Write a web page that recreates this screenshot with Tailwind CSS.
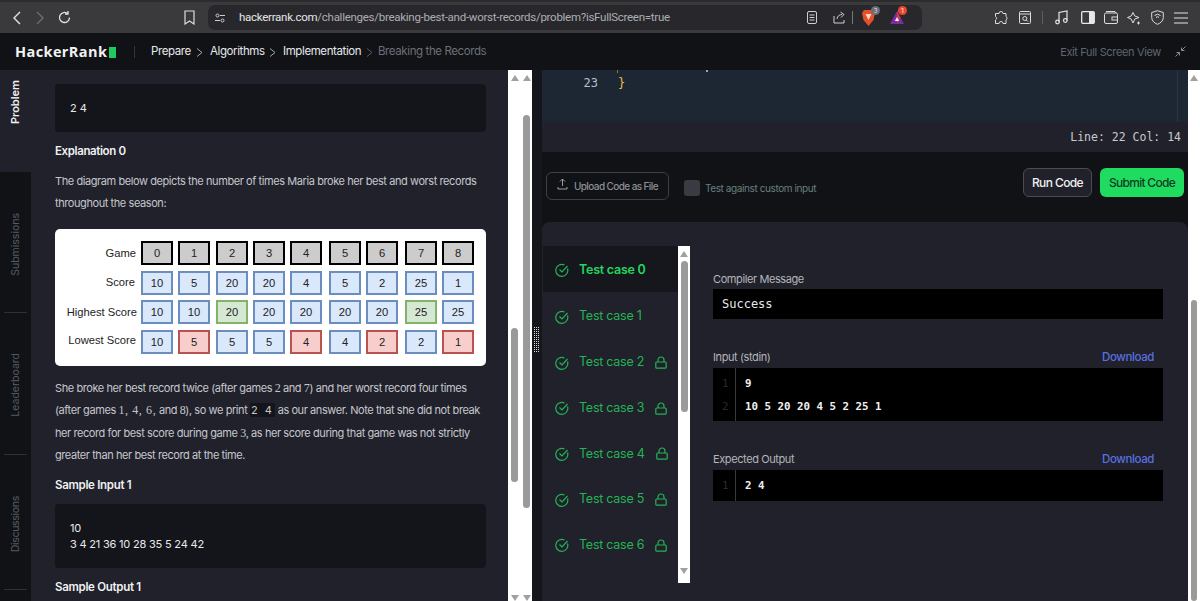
<!DOCTYPE html>
<html>
<head>
<meta charset="utf-8">
<script src="https://cdn.jsdelivr.net/npm/@tailwindcss/browser@4"></script>
</head>
<body class="w-[1200px] h-[601px] overflow-hidden bg-[#101216] font-['Inter',sans-serif]">
<!-- Browser bar -->
<div class="h-[33px] bg-[#3a3a3d] border-t-2 border-[#2c2c2f] flex items-center text-[#d6d6d8] relative">
  <svg class="ml-[12px] w-[10px] h-[14px]" viewBox="0 0 10 14" fill="none" stroke="#e4e4e6" stroke-width="1.4"><path d="M8 1 2 7l6 6"/></svg>
  <svg class="ml-[13px] w-[10px] h-[14px]" viewBox="0 0 10 14" fill="none" stroke="#6d6d70" stroke-width="1.4"><path d="M2 1l6 6-6 6"/></svg>
  <svg class="ml-[12px] w-[15px] h-[15px]" viewBox="0 0 15 15" fill="none" stroke="#e4e4e6" stroke-width="1.3"><path d="M12.5 7.5a5 5 0 1 1-1.6-3.7"/><path d="M11 1v3H8"/></svg>
  <svg class="ml-[112px] w-[11px] h-[15px]" viewBox="0 0 11 15" fill="none" stroke="#dcdcde" stroke-width="1.2"><path d="M1 1h9v13l-4.500-3L1 14z"/></svg>
  <div class="ml-[13px] w-[714px] h-[25px] rounded-[7px] bg-[#28282c] flex items-center">
    <svg class="ml-[7px] w-[10px] h-[10px]" viewBox="0 0 10 10" fill="none" stroke="#cfcfd2"><circle cx="2.500" cy="2.500" r="1.500"/><circle cx="7.500" cy="7.500" r="1.500"/><path d="M5 2.500h5M0 7.500h5"/></svg>
    <span class="ml-[14px] w-[500px] text-[11.500px] tracking-[-.27px] whitespace-nowrap text-[#aeaeb2] font-['Roboto',sans-serif]"><span class="text-[#e6e6e8]">hackerrank.com</span>/challenges/breaking-best-and-worst-records/problem?isFullScreen=true</span>
    <svg class="ml-[68px] w-[10px] h-[13px]" viewBox="0 0 10 13" fill="none" stroke="#cfcfd2"><rect x=".5" y=".5" width="9" height="12" rx="1.500"/><path d="M2.500 4h5M2.500 6.500h5M2.500 9h5"/></svg>
    <svg class="ml-[16px] w-[13px] h-[13px]" viewBox="0 0 13 13" fill="none" stroke="#cfcfd2"><path d="M1 5v7h10V9M4 8c0-3 3-4.500 5-4.500M7.500 1 11 3.500 8 6.500"/></svg>
    <span class="ml-[6px] w-px h-[13px] bg-[#77777b]"></span>
    <span class="relative ml-[9px] w-[13px] h-[17px] flex">
      <svg class="w-[13px] h-[17px]" viewBox="0 0 13 17"><path d="M2 1h9l2 3-1.500 7L6.500 17 1.500 11 0 4z" fill="#e4502a"/><path d="M3.500 5h6l-3 6z" fill="#f7d7c8"/></svg>
      <span class="absolute -top-[3px] -right-[5px] w-[9px] h-[9px] rounded-full bg-[#6a6d75] text-[6px] leading-[9px] text-center text-[#ddd]">3</span>
    </span>
    <span class="relative ml-[15px] w-[14px] h-[13px] flex">
      <svg class="w-[14px] h-[13px]" viewBox="0 0 14 13"><path d="M7 0l7 13H0z" fill="#7a2ca8"/><path d="M7 0l3.500 6.500L7 13z" fill="#d43a44"/><path d="M7 6l2 4H5z" fill="#fff"/></svg>
      <span class="absolute -top-[5px] -right-[3px] w-[9px] h-[9px] rounded-full bg-[#e9482f] text-[6px] leading-[9px] text-center text-white">1</span>
    </span>
  </div>
  <svg class="ml-[72px] w-[14px] h-[14px]" viewBox="0 0 14 14" fill="none" stroke="#dcdcde"><path d="M5 2.500a2 2 0 0 1 4 0h3v3a2 2 0 0 1 0 3.500v3.500H9a2 2 0 0 0-4 0H1.500V9a2 2 0 0 0 0-3.500V2.500z"/></svg>
  <svg class="ml-[11px] w-[12px] h-[13px]" viewBox="0 0 12 13" fill="none" stroke="#dcdcde"><rect x=".5" y=".5" width="11" height="12" rx="1"/><path d="M.5 3h11"/><circle cx="5.800" cy="7.500" r="2"/><path d="m7.300 9 1.500 1.500"/></svg>
  <span class="ml-[11px] w-px h-[13px] bg-[#5e5e62]"></span>
  <svg class="ml-[12px] w-[13px] h-[15px]" viewBox="0 0 13 15" fill="none" stroke="#e4e4e6" stroke-width="1.200"><path d="M4 12V2.500L12 1v9.500"/><circle cx="2.500" cy="12" r="1.800"/><circle cx="10.300" cy="10.500" r="1.800"/></svg>
  <svg class="ml-[13px] w-[14px] h-[13px]" viewBox="0 0 14 13"><rect x=".7" y=".7" width="12.600" height="11.600" rx="1" fill="none" stroke="#e8e8ea" stroke-width="1.300"/><rect x="8" y="1" width="5" height="11" fill="#e8e8ea"/></svg>
  <svg class="ml-[9px] w-[14px] h-[13px]" viewBox="0 0 14 13" fill="none" stroke="#dcdcde"><rect x=".5" y="2" width="13" height="10.500" rx="1.500"/><path d="M2 .5h9l1 1.500"/><rect x="8" y="6" width="5.500" height="3" /></svg>
  <svg class="ml-[9px] w-[14px] h-[14px]" viewBox="0 0 14 14" fill="none" stroke="#dcdcde"><path d="M6 1.500 7.800 5 12 6.500 7.800 8 6 12 4.200 8 .5 6.500 4.200 5z"/><path d="M11.500 10.500v3M10 12h3" /></svg>
  <svg class="ml-[10px] w-[13px] h-[15px]" viewBox="0 0 13 15" fill="none" stroke="#dcdcde"><path d="M6.500.7 12.300 2.500v5c0 3.500-3 5.800-5.800 6.800C3.700 13.300.7 11 .7 7.500v-5z"/><path d="M3.500 5.500a4.500 4.500 0 0 1 6 0M5 7.500a2 2 0 0 1 3 0"/></svg>
  <svg class="ml-[10px] w-[14px] h-[12px]" viewBox="0 0 14 12" stroke="#e4e4e6" stroke-width="1.200"><path d="M0 1h14M0 6h14M0 11h14"/></svg>
</div>
<!-- Site header -->
<header class="h-[37px] bg-[#101216] flex items-center relative">
  <span class="ml-[15px] mt-[1px] text-[14.500px] font-bold text-[#f2f2f2] tracking-[.4px] w-[94px] font-['Open_Sans',sans-serif]">HackerRank</span>
  <span class="mt-[1px] w-[7px] h-[11px] bg-[#1ec95f]"></span>
  <span class="ml-[18px] mt-[1px] w-px h-[12px] bg-[#34363b]"></span>
  <nav class="ml-[16px] mt-[1px] flex items-center text-[11.500px] whitespace-nowrap tracking-[-.4px]">
    <span class="w-[40px] text-[#e8e8ea]">Prepare</span>
    <svg class="ml-[4px] w-[9px] h-[9px]" viewBox="0 0 9 9" fill="none" stroke="#a5a7ab"><path d="m2 .5 5 4-5 4"/></svg>
    <span class="ml-[6px] w-[54px] text-[#e8e8ea]">Algorithms</span>
    <svg class="ml-[4px] w-[9px] h-[9px]" viewBox="0 0 9 9" fill="none" stroke="#a5a7ab"><path d="m2 .5 5 4-5 4"/></svg>
    <span class="ml-[6px] w-[77px] text-[#e8e8ea]">Implementation</span>
    <svg class="ml-[5px] w-[9px] h-[9px]" viewBox="0 0 9 9" fill="none" stroke="#55575c"><path d="m2 .5 5 4-5 4"/></svg>
    <span class="ml-[4px] text-[#6c6f75]">Breaking the Records</span>
  </nav>
  <span class="ml-auto mt-[1px] text-[11px] text-[#5f6670] tracking-[-.35px]">Exit Full Screen View</span>
  <svg class="ml-[14px] mr-[14px] w-[11px] h-[11px]" viewBox="0 0 11 11" fill="none" stroke="#838a94"><path d="M10.500.5 6.500 4.500M6.500 1.500v3h3M.5 10.500l4-4M1.500 6.500h3v3"/></svg>
</header>
<main class="flex h-[531px]">
  <!-- Left rail -->
  <aside class="w-[31px] flex flex-col text-[10.500px] bg-[#101216]">
    <div class="h-[102px] bg-[#20212b] flex items-start justify-center pt-[10px]"><span class="[writing-mode:vertical-rl] rotate-180 font-semibold text-[11px] text-[#f0f0f0]">Problem</span></div>
    <div class="h-[141px] flex items-start justify-center pt-[41px] border-b border-[#2e3036] mx-[4px]"><span class="[writing-mode:vertical-rl] rotate-180 text-[#565b63]">Submissions</span></div>
    <div class="h-[142px] flex items-start justify-center pt-[40px] border-b border-[#2e3036] mx-[4px]"><span class="[writing-mode:vertical-rl] rotate-180 text-[#565b63]">Leaderboard</span></div>
    <div class="h-[135px] flex items-start justify-center pt-[41px] border-b border-[#2e3036] mx-[4px]"><span class="[writing-mode:vertical-rl] rotate-180 text-[#565b63] tracking-[-.3px]">Discussions</span></div>
  </aside>
  <!-- Problem -->
  <section class="w-[477px] bg-[#20212b] px-[24px] pt-[14px] overflow-hidden text-[11px] tracking-[-.42px] text-[#c6c7cb]">
    <div class="h-[48px] w-[431px] rounded-[4px] bg-[#14151a] px-[15px] pt-[17px] leading-[14px] text-[#e8e8ea] tracking-normal">2 4</div>
    <h3 class="mt-[12px] h-[14px] leading-[14px] text-[11.500px] tracking-[-.38px] font-semibold text-[#f0f0f2]">Explanation 0</h3>
    <p class="mt-[12px] leading-[22px] whitespace-nowrap">The diagram below depicts the number of times Maria broke her best and worst records<br>throughout the season:</p>
    <!-- Diagram -->
    <div class="mt-[15px] w-[431px] h-[137px] rounded-[5px] bg-white pt-[12px] font-['Liberation_Sans',sans-serif] tracking-normal text-[11.200px] text-[#222] flex flex-col gap-[5.500px]">
      <div class="flex h-[24px] items-center">
        <span class="w-[81px] text-right">Game</span><span class="ml-[5px] flex gap-[5px]">
          <span class="w-[32px] h-[24px] border-2 border-black bg-[#ccc] text-center leading-[20px]">0</span>
          <span class="w-[32px] h-[24px] border-2 border-black bg-[#ccc] text-center leading-[20px]">1</span>
          <span class="ml-[1px] w-[32px] h-[24px] border-2 border-black bg-[#ccc] text-center leading-[20px]">2</span>
          <span class="w-[32px] h-[24px] border-2 border-black bg-[#ccc] text-center leading-[20px]">3</span>
          <span class="w-[32px] h-[24px] border-2 border-black bg-[#ccc] text-center leading-[20px]">4</span>
          <span class="ml-[2px] w-[32px] h-[24px] border-2 border-black bg-[#ccc] text-center leading-[20px]">5</span>
          <span class="w-[32px] h-[24px] border-2 border-black bg-[#ccc] text-center leading-[20px]">6</span>
          <span class="ml-[2px] w-[32px] h-[24px] border-2 border-black bg-[#ccc] text-center leading-[20px]">7</span>
          <span class="w-[32px] h-[24px] border-2 border-black bg-[#ccc] text-center leading-[20px]">8</span>
        </span>
      </div>
      <div class="flex h-[24px] items-center">
        <span class="w-[80px] text-right">Score</span><span class="ml-[6px] flex gap-[5px]">
          <span class="w-[32px] h-[24px] border-2 border-[#6c8ebf] bg-[#dae8fc] text-center leading-[20px]">10</span>
          <span class="w-[32px] h-[24px] border-2 border-[#6c8ebf] bg-[#dae8fc] text-center leading-[20px]">5</span>
          <span class="ml-[1px] w-[32px] h-[24px] border-2 border-[#6c8ebf] bg-[#dae8fc] text-center leading-[20px]">20</span>
          <span class="w-[32px] h-[24px] border-2 border-[#6c8ebf] bg-[#dae8fc] text-center leading-[20px]">20</span>
          <span class="w-[32px] h-[24px] border-2 border-[#6c8ebf] bg-[#dae8fc] text-center leading-[20px]">4</span>
          <span class="ml-[2px] w-[32px] h-[24px] border-2 border-[#6c8ebf] bg-[#dae8fc] text-center leading-[20px]">5</span>
          <span class="w-[32px] h-[24px] border-2 border-[#6c8ebf] bg-[#dae8fc] text-center leading-[20px]">2</span>
          <span class="ml-[2px] w-[32px] h-[24px] border-2 border-[#6c8ebf] bg-[#dae8fc] text-center leading-[20px]">25</span>
          <span class="w-[32px] h-[24px] border-2 border-[#6c8ebf] bg-[#dae8fc] text-center leading-[20px]">1</span>
        </span>
      </div>
      <div class="flex h-[24px] items-center">
        <span class="w-[82px] text-right whitespace-nowrap">Highest Score</span><span class="ml-[4px] flex gap-[5px]">
          <span class="w-[32px] h-[24px] border-2 border-[#6c8ebf] bg-[#dae8fc] text-center leading-[20px]">10</span>
          <span class="w-[32px] h-[24px] border-2 border-[#6c8ebf] bg-[#dae8fc] text-center leading-[20px]">10</span>
          <span class="ml-[1px] w-[32px] h-[24px] border-2 border-[#82b366] bg-[#d5e8d4] text-center leading-[20px]">20</span>
          <span class="w-[32px] h-[24px] border-2 border-[#6c8ebf] bg-[#dae8fc] text-center leading-[20px]">20</span>
          <span class="w-[32px] h-[24px] border-2 border-[#6c8ebf] bg-[#dae8fc] text-center leading-[20px]">20</span>
          <span class="ml-[2px] w-[32px] h-[24px] border-2 border-[#6c8ebf] bg-[#dae8fc] text-center leading-[20px]">20</span>
          <span class="w-[32px] h-[24px] border-2 border-[#6c8ebf] bg-[#dae8fc] text-center leading-[20px]">20</span>
          <span class="ml-[2px] w-[32px] h-[24px] border-2 border-[#82b366] bg-[#d5e8d4] text-center leading-[20px]">25</span>
          <span class="w-[32px] h-[24px] border-2 border-[#6c8ebf] bg-[#dae8fc] text-center leading-[20px]">25</span>
        </span>
      </div>
      <div class="flex h-[24px] items-start">
        <span class="w-[81px] text-right whitespace-nowrap leading-[20px]">Lowest Score</span><span class="ml-[5px] flex gap-[5px]">
          <span class="w-[32px] h-[24px] border-2 border-[#6c8ebf] bg-[#dae8fc] text-center leading-[20px]">10</span>
          <span class="w-[32px] h-[24px] border-2 border-[#b85450] bg-[#f8cecc] text-center leading-[20px]">5</span>
          <span class="ml-[1px] w-[32px] h-[24px] border-2 border-[#6c8ebf] bg-[#dae8fc] text-center leading-[20px]">5</span>
          <span class="w-[32px] h-[24px] border-2 border-[#6c8ebf] bg-[#dae8fc] text-center leading-[20px]">5</span>
          <span class="w-[32px] h-[24px] border-2 border-[#b85450] bg-[#f8cecc] text-center leading-[20px]">4</span>
          <span class="ml-[2px] w-[32px] h-[24px] border-2 border-[#6c8ebf] bg-[#dae8fc] text-center leading-[20px]">4</span>
          <span class="w-[32px] h-[24px] border-2 border-[#b85450] bg-[#f8cecc] text-center leading-[20px]">2</span>
          <span class="ml-[2px] w-[32px] h-[24px] border-2 border-[#6c8ebf] bg-[#dae8fc] text-center leading-[20px]">2</span>
          <span class="w-[32px] h-[24px] border-2 border-[#b85450] bg-[#f8cecc] text-center leading-[20px]">1</span>
        </span>
      </div>
    </div>
    <p class="mt-[11px] leading-[22.400px] whitespace-nowrap">She broke her best record twice (after games <span class="font-['Liberation_Serif',serif] text-[12px] leading-none">2</span> and <span class="font-['Liberation_Serif',serif] text-[12px] leading-none">7</span>) and her worst record four times<br>(after games <span class="font-['Liberation_Serif',serif] text-[12px] leading-none tracking-[.6px]">1, 4, 6,</span> and <span class="font-['Liberation_Serif',serif] text-[12px] leading-none">8</span>), so we print <span class="bg-[#14151a] px-[1px] tracking-[2px]">2 4</span> as our answer. Note that she did not break<br>her record for best score during game <span class="font-['Liberation_Serif',serif] text-[12px] leading-none">3,</span> as her score during that game was not strictly<br>greater than her best record at the time.</p>
    <h3 class="mt-[11px] h-[14px] leading-[14px] text-[11.500px] tracking-[-.3px] font-semibold text-[#f0f0f2]">Sample Input 1</h3>
    <div class="mt-[12px] h-[64px] w-[431px] rounded-[4px] bg-[#14151a] px-[15px] pt-[16px] leading-[16px] text-[#e8e8ea] tracking-[-.2px]">10<br>3 4 21 36 10 28 35 5 24 42</div>
    <h3 class="mt-[12px] h-[14px] leading-[14px] text-[11.500px] tracking-[-.3px] font-semibold text-[#f0f0f2]">Sample Output 1</h3>
  </section>
  <!-- Double scrollbar -->
  <div class="relative w-[24px] bg-white flex justify-between pl-[3px] pr-[2px]">
    <div class="w-[7px] flex flex-col items-center relative">
      <span class="mt-[5px] w-0 h-0 border-x-[4px] border-x-transparent border-b-[6px] border-b-[#a0a0a0]"></span>
      <span class="mt-[247px] w-[7px] h-[154px] rounded-full bg-[#9a9a9a]"></span>
      <span class="mt-[113px] w-0 h-0 border-x-[4px] border-x-transparent border-t-[6px] border-t-[#a0a0a0]"></span>
    </div>
    <div class="w-[7px] flex flex-col items-center">
      <span class="mt-[5px] w-0 h-0 border-x-[4px] border-x-transparent border-b-[6px] border-b-[#a0a0a0]"></span>
      <span class="mt-[34px] w-[7px] h-[393px] rounded-full bg-[#9a9a9a]"></span>
      <span class="mt-[87px] w-0 h-0 border-x-[4px] border-x-transparent border-t-[6px] border-t-[#a0a0a0]"></span>
    </div>
  </div>
  <!-- Divider -->
  <div class="w-[10px] bg-[#15161b] flex items-start justify-center pt-[257px]">
    <svg class="w-[6px] h-[25px]" viewBox="0 0 6 25" stroke="#d8d8d8" stroke-dasharray="1 1"><path d="M.5 0v25M2.500 0v25M4.500 0v25"/></svg>
  </div>
  <!-- Right -->
  <section class="w-[646px] bg-[#101216] flex flex-col">
    <div class="relative h-[52px] bg-[#1d2733] flex items-start">
      <span class="w-[56px] mt-[5px] text-right text-[12px] leading-[16px] font-['DejaVu_Sans_Mono',monospace] text-[#b8c0c8]">23</span>
      <span class="ml-[20px] mt-[5px] text-[12px] leading-[16px] font-['DejaVu_Sans_Mono',monospace] text-[#e5c04b]">}</span>
      <span class="absolute left-[75px] top-0 w-px h-[3px] bg-[#8a7a40]"></span>
      <span class="absolute left-[164px] top-0 w-[2px] h-[2px] bg-[#9aa2aa]"></span>
      <span class="ml-auto mr-[10px] h-[52px] w-px bg-[#2c3644]"></span>
    </div>
    <div class="h-[30px] bg-[#20212b] flex items-center justify-end pr-[7px] pt-[1px] text-[11.500px] font-['DejaVu_Sans_Mono',monospace] text-[#c8c9cc]">Line: 22 Col: 14</div>
    <div class="h-[70px] flex items-start pl-[4px] pr-[4px]">
      <button class="mt-[20px] w-[123px] h-[28px] rounded-[6px] border border-[#3c3e45] flex items-center justify-center text-[10px] tracking-[-.6px] font-medium text-[#8c8f96]">
        <svg class="mr-[6px] mb-[4px] w-[11px] h-[12px]" viewBox="0 0 11 12" fill="none" stroke="#9a9da3"><path d="M5.500 8V1M3 3.500 5.500 1 8 3.500M1 9v2h9V9"/></svg>Upload Code as File
      </button>
      <span class="ml-[15px] mt-[28px] w-[16px] h-[16px] rounded-[3px] bg-[#3a3b42]"></span>
      <span class="ml-[5px] mt-[29px] text-[10px] tracking-[-.4px] leading-[14px] text-[#6b7f7f]">Test against custom input</span>
      <button class="ml-auto mt-[16px] w-[69px] h-[29px] rounded-[6px] bg-[#20212b] border border-[#4a4c53] text-[12px] tracking-[-.6px] font-medium text-[#f0f0f2]">Run Code</button>
      <button class="ml-[8px] mt-[16px] w-[84px] h-[29px] rounded-[6px] bg-[#1fdb60] text-[12px] tracking-[-.7px] font-medium text-[#0f3d22]">Submit Code</button>
    </div>
    <!-- Results -->
    <div class="flex-1 rounded-t-[8px] bg-[#20212b] flex pt-[24px] pl-[1px]">
      <div class="w-[135px] h-[337px] text-[12.500px] tracking-[-.25px] text-[#22b455]">
        <div class="h-[46px] bg-[#16171c] flex items-center pl-[12px] pt-[2px] font-semibold text-[#22d65f]"><svg class="w-[14px] h-[14px] mr-[10px]" viewBox="0 0 14 14" fill="none" stroke="#22b455" stroke-width="1.200"><path d="M12.500 5.500A6 6 0 1 1 9.500 2"/><path d="m4.500 6.500 2.500 2.500 5.500-6"/></svg>Test case 0</div>
        <div class="mt-[1px] h-[45.700px] flex items-center pl-[12px] pt-[2px]"><svg class="w-[14px] h-[14px] mr-[10px]" viewBox="0 0 14 14" fill="none" stroke="#22b455" stroke-width="1.200"><path d="M12.500 5.500A6 6 0 1 1 9.500 2"/><path d="m4.500 6.500 2.500 2.500 5.500-6"/></svg>Test case 1</div>
        <div class="h-[45.700px] flex items-center pl-[12px] pt-[2px]"><svg class="w-[14px] h-[14px] mr-[10px]" viewBox="0 0 14 14" fill="none" stroke="#22b455" stroke-width="1.200"><path d="M12.500 5.500A6 6 0 1 1 9.500 2"/><path d="m4.500 6.500 2.500 2.500 5.500-6"/></svg>Test case 2<svg class="ml-[11px] w-[12px] h-[13px]" viewBox="0 0 12 13" fill="none" stroke="#22b455" stroke-width="1.200"><rect x=".8" y="6" width="10.400" height="6.200" rx="1"/><path d="M3 6V4a3 3 0 0 1 6 0v2"/></svg></div>
        <div class="h-[45.700px] flex items-center pl-[12px] pt-[2px]"><svg class="w-[14px] h-[14px] mr-[10px]" viewBox="0 0 14 14" fill="none" stroke="#22b455" stroke-width="1.200"><path d="M12.500 5.500A6 6 0 1 1 9.500 2"/><path d="m4.500 6.500 2.500 2.500 5.500-6"/></svg>Test case 3<svg class="ml-[11px] w-[12px] h-[13px]" viewBox="0 0 12 13" fill="none" stroke="#22b455" stroke-width="1.200"><rect x=".8" y="6" width="10.400" height="6.200" rx="1"/><path d="M3 6V4a3 3 0 0 1 6 0v2"/></svg></div>
        <div class="h-[45.700px] flex items-center pl-[12px] pt-[2px]"><svg class="w-[14px] h-[14px] mr-[10px]" viewBox="0 0 14 14" fill="none" stroke="#22b455" stroke-width="1.200"><path d="M12.500 5.500A6 6 0 1 1 9.500 2"/><path d="m4.500 6.500 2.500 2.500 5.500-6"/></svg>Test case 4<svg class="ml-[11px] w-[12px] h-[13px]" viewBox="0 0 12 13" fill="none" stroke="#22b455" stroke-width="1.200"><rect x=".8" y="6" width="10.400" height="6.200" rx="1"/><path d="M3 6V4a3 3 0 0 1 6 0v2"/></svg></div>
        <div class="h-[45.700px] flex items-center pl-[12px] pt-[2px]"><svg class="w-[14px] h-[14px] mr-[10px]" viewBox="0 0 14 14" fill="none" stroke="#22b455" stroke-width="1.200"><path d="M12.500 5.500A6 6 0 1 1 9.500 2"/><path d="m4.500 6.500 2.500 2.500 5.500-6"/></svg>Test case 5<svg class="ml-[11px] w-[12px] h-[13px]" viewBox="0 0 12 13" fill="none" stroke="#22b455" stroke-width="1.200"><rect x=".8" y="6" width="10.400" height="6.200" rx="1"/><path d="M3 6V4a3 3 0 0 1 6 0v2"/></svg></div>
        <div class="h-[45.700px] flex items-center pl-[12px] pt-[2px]"><svg class="w-[14px] h-[14px] mr-[10px]" viewBox="0 0 14 14" fill="none" stroke="#22b455" stroke-width="1.200"><path d="M12.500 5.500A6 6 0 1 1 9.500 2"/><path d="m4.500 6.500 2.500 2.500 5.500-6"/></svg>Test case 6<svg class="ml-[11px] w-[12px] h-[13px]" viewBox="0 0 12 13" fill="none" stroke="#22b455" stroke-width="1.200"><rect x=".8" y="6" width="10.400" height="6.200" rx="1"/><path d="M3 6V4a3 3 0 0 1 6 0v2"/></svg></div>
      </div>
      <div class="w-[12px] h-[337px] bg-white flex flex-col items-center">
        <span class="mt-[5px] w-0 h-0 border-x-[4px] border-x-transparent border-b-[6px] border-b-[#a0a0a0]"></span>
        <span class="mt-[4px] w-[7px] h-[151px] rounded-full bg-[#9a9a9a]"></span>
        <span class="mt-[156px] w-0 h-0 border-x-[4px] border-x-transparent border-t-[6px] border-t-[#a0a0a0]"></span>
      </div>
      <div class="ml-[23px] w-[450px] text-[11px] text-[#b4b5ba] tracking-[-.4px]">
        <div class="mt-[26px] h-[17px] leading-[14px]">Compiler Message</div>
        <div class="h-[30px] bg-black pl-[9px] leading-[30px] text-[12px] tracking-normal font-['DejaVu_Sans_Mono',monospace] text-[#e8e8e8]">Success</div>
        <div class="mt-[31px] h-[18px] flex justify-between leading-[14px]"><span>Input (stdin)</span><span class="mr-[9px] font-medium text-[11.500px] tracking-[-.4px] text-[#5a70e0]">Download</span></div>
        <div class="h-[53px] bg-black flex text-[10.800px] leading-[23px] tracking-normal font-['DejaVu_Sans_Mono',monospace]">
          <div class="w-[23px] border-r border-[#3a3a3a] pt-[4px] pl-[9px] text-[#2a2a2a] font-normal">1<br>2</div>
          <div class="pl-[9px] pt-[4px] font-bold text-[#f0f0f0]">9<br>10 5 20 20 4 5 2 25 1</div>
        </div>
        <div class="mt-[31px] h-[18px] flex justify-between leading-[14px]"><span>Expected Output</span><span class="mr-[9px] font-medium text-[11.500px] tracking-[-.4px] text-[#5a70e0]">Download</span></div>
        <div class="h-[31px] bg-black flex text-[10.800px] leading-[23px] tracking-normal font-['DejaVu_Sans_Mono',monospace]">
          <div class="w-[23px] border-r border-[#3a3a3a] pt-[4px] pl-[9px] text-[#2a2a2a]">1</div>
          <div class="pl-[9px] pt-[4px] font-bold text-[#f0f0f0]">2 4</div>
        </div>
      </div>
    </div>
  </section>
  <!-- Page scrollbar -->
  <div class="w-[12px] bg-white flex flex-col items-center">
    <span class="mt-[5px] w-0 h-0 border-x-[4px] border-x-transparent border-b-[6px] border-b-[#a0a0a0]"></span>
    <span class="mt-[219px] w-[6px] h-[301px] rounded-full bg-[#9a9a9a]"></span>
  </div>
</main>
</body>
</html>
